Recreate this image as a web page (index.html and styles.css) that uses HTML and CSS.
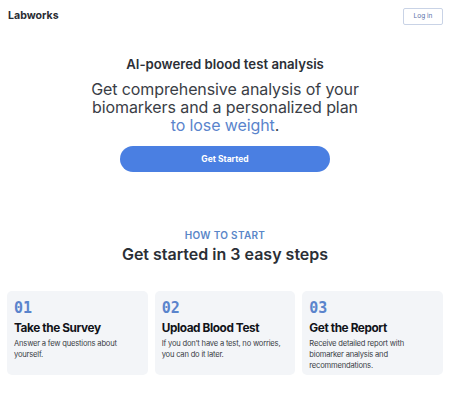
FILE: index.html
```html
<!DOCTYPE html>
<html lang="en">
<head>
<meta charset="utf-8">
<title>Labworks</title>
<link rel="stylesheet" href="styles.css">
</head>
<body>
<header class="topbar">
  <div class="logo">Labworks</div>
  <button class="login">Log in</button>
</header>
<section class="hero">
  <h2 class="eyebrow">AI-powered blood test analysis</h2>
  <h1 class="headline">Get comprehensive analysis of your biomarkers and a personalized plan <span class="accent">to lose weight</span>.</h1>
  <button class="cta">Get Started</button>
</section>
<section class="steps">
  <div class="kicker">HOW TO START</div>
  <h2 class="steps-title">Get started in 3 easy steps</h2>
  <div class="cards">
    <div class="card">
      <div class="num">01</div>
      <h3 class="card-title">Take the Survey</h3>
      <p class="card-text">Answer a few questions about yourself.</p>
    </div>
    <div class="card">
      <div class="num">02</div>
      <h3 class="card-title">Upload Blood Test</h3>
      <p class="card-text">If you don’t have a test, no worries, you can do it later.</p>
    </div>
    <div class="card">
      <div class="num">03</div>
      <h3 class="card-title">Get the Report</h3>
      <p class="card-text">Receive detailed report with biomarker analysis and recommendations.</p>
    </div>
  </div>
</section>
</body>
</html>
```

FILE: styles.css
```css
* { box-sizing: border-box; }
html, body { margin: 0; padding: 0; background: #fff; }
body {
  font-family: Inter, "Noto Sans", sans-serif;
  color: #2b2f36;
  width: 450px;
}
.topbar {
  display: flex;
  justify-content: space-between;
  align-items: center;
  padding: 7px 8px 0 8px;
  height: 24px;
}
.logo {
  font-size: 10.6px;
  font-weight: 700;
  color: #2a2d33;
}
.login {
  font-family: Inter, sans-serif;
  font-size: 6.5px;
  color: #5a73a8;
  background: #fff;
  border: 1px solid #c9d3e6;
  border-radius: 2px;
  width: 40px;
  height: 17px;
  padding: 0;
  margin-top: 1px;
  margin-right: -1px;
}
.hero {
  display: flex;
  flex-direction: column;
  align-items: center;
  padding-top: 31px;
}
.eyebrow {
  margin: 0;
  font-size: 13.2px;
  font-weight: 600;
  color: #2b2f36;
  line-height: 18px;
}
.headline {
  margin: 7px 0 0;
  width: 272px;
  text-align: center;
  font-size: 16px;
  letter-spacing: -0.1px;
  font-weight: 400;
  line-height: 18px;
  color: #3a3e46;
}
.accent { color: #5a84cc; }
.cta {
  margin-top: 12px;
  width: 210px;
  height: 26px;
  border: 0;
  border-radius: 13px;
  background: #4a7fe2;
  color: #fff;
  font-family: Inter, sans-serif;
  font-size: 8.5px;
  font-weight: 700;
}
.steps {
  display: flex;
  flex-direction: column;
  align-items: center;
  padding-top: 56px;
}
.kicker {
  font-size: 10px;
  font-weight: 600;
  color: #5a86c8;
  letter-spacing: 0.3px;
  line-height: 14px;
}
.steps-title {
  margin: 1px 0 0;
  font-size: 16px;
  font-weight: 600;
  color: #2b2f36;
  line-height: 22px;
}
.cards {
  display: grid;
  grid-template-columns: repeat(3, 1fr);
  gap: 7px;
  width: 100%;
  padding: 0 7px;
  margin-top: 26px;
}
.card {
  background: #f3f5f8;
  border-radius: 5px;
  padding: 9px 7px 9px;
  height: 84px;
}
.num {
  font-family: "DejaVu Sans Mono", monospace;
  font-size: 15px;
  font-weight: 700;
  color: #5a84cc;
  line-height: 16px;
}
.card-title {
  margin: 5px 0 0;
  font-size: 11.8px;
  letter-spacing: -0.4px;
  font-weight: 700;
  color: #111318;
  line-height: 14px;
}
.card-text {
  margin: 3px 0 0;
  font-size: 7.6px;
  letter-spacing: -0.2px;
  line-height: 11px;
  color: #3a3e46;
}
```
